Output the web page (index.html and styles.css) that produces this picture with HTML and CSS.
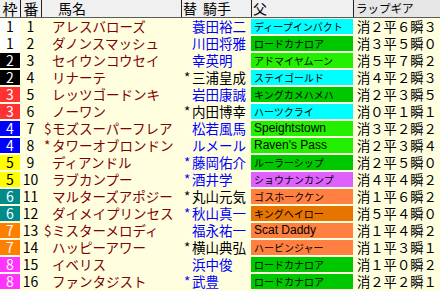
FILE: index.html
```html
<!DOCTYPE html>
<html lang="ja">
<head>
<meta charset="utf-8">
<link rel="stylesheet" href="styles.css">
</head>
<body>
<div class="table">
  <div class="head">
    <div class="h c-waku">枠</div>
    <div class="h c-num sep">番</div>
    <div class="h c-name sep">馬名</div>
    <div class="h c-jockey sep"><span>替</span><span class="kishu">騎手</span></div>
    <div class="h c-sire sep">父</div>
    <div class="h c-lap sep">ラップギア</div>
  </div>
  <div class="rows">
    <div class="row"><div class="waku w1">1</div><div class="num">1</div><div class="name"><span class="mk"></span>アレスバローズ</div><div class="jockey blue"><span class="mk"></span>蓑田裕二</div><div class="sire cyan">ディープインパクト</div><div class="lap">消２平６瞬３</div></div>
    <div class="row"><div class="waku w1">1</div><div class="num">2</div><div class="name"><span class="mk"></span>ダノンスマッシュ</div><div class="jockey blue"><span class="mk"></span>川田将雅</div><div class="sire green">ロードカナロア</div><div class="lap">消３平５瞬０</div></div>
    <div class="row"><div class="waku w2">2</div><div class="num">3</div><div class="name"><span class="mk"></span>セイウンコウセイ</div><div class="jockey blue"><span class="mk"></span>幸英明</div><div class="sire lime">アドマイヤムーン</div><div class="lap">消５平７瞬２</div></div>
    <div class="row"><div class="waku w2">2</div><div class="num">4</div><div class="name"><span class="mk"></span>リナーテ</div><div class="jockey"><span class="mk">*</span>三浦皇成</div><div class="sire cyan">ステイゴールド</div><div class="lap">消４平２瞬３</div></div>
    <div class="row"><div class="waku w3">3</div><div class="num">5</div><div class="name"><span class="mk"></span>レッツゴードンキ</div><div class="jockey blue"><span class="mk"></span>岩田康誠</div><div class="sire green">キングカメハメハ</div><div class="lap">消２平３瞬５</div></div>
    <div class="row"><div class="waku w3">3</div><div class="num">6</div><div class="name"><span class="mk"></span>ノーワン</div><div class="jockey"><span class="mk">*</span>内田博幸</div><div class="sire cyan">ハーツクライ</div><div class="lap">消０平１瞬１</div></div>
    <div class="row"><div class="waku w4">4</div><div class="num">7</div><div class="name"><span class="mk">$</span>モズスーパーフレア</div><div class="jockey blue"><span class="mk"></span>松若風馬</div><div class="sire lime lat">Speightstown</div><div class="lap">消３平２瞬２</div></div>
    <div class="row"><div class="waku w4">4</div><div class="num">8</div><div class="name"><span class="mk">*</span>タワーオブロンドン</div><div class="jockey blue"><span class="mk"></span>ルメール</div><div class="sire lime lat">Raven's Pass</div><div class="lap">消２平３瞬４</div></div>
    <div class="row"><div class="waku w5">5</div><div class="num">9</div><div class="name"><span class="mk"></span>ディアンドル</div><div class="jockey blue"><span class="mk">*</span>藤岡佑介</div><div class="sire green">ルーラーシップ</div><div class="lap">消２平５瞬０</div></div>
    <div class="row"><div class="waku w5">5</div><div class="num">10</div><div class="name"><span class="mk"></span>ラブカンプー</div><div class="jockey blue"><span class="mk">*</span>酒井学</div><div class="sire violet">ショウナンカンプ</div><div class="lap">消４平４瞬２</div></div>
    <div class="row"><div class="waku w6">6</div><div class="num">11</div><div class="name"><span class="mk"></span>マルターズアポジー</div><div class="jockey"><span class="mk">*</span>丸山元気</div><div class="sire orange">ゴスホークケン</div><div class="lap">消１平６瞬２</div></div>
    <div class="row"><div class="waku w6">6</div><div class="num">12</div><div class="name"><span class="mk"></span>ダイメイプリンセス</div><div class="jockey blue"><span class="mk">*</span>秋山真一</div><div class="sire dorange">キングヘイロー</div><div class="lap">消５平４瞬０</div></div>
    <div class="row"><div class="waku w7">7</div><div class="num">13</div><div class="name"><span class="mk">$</span>ミスターメロディ</div><div class="jockey blue"><span class="mk"></span>福永祐一</div><div class="sire orange lat">Scat Daddy</div><div class="lap">消１平４瞬２</div></div>
    <div class="row"><div class="waku w7">7</div><div class="num">14</div><div class="name"><span class="mk"></span>ハッピーアワー</div><div class="jockey"><span class="mk">*</span>横山典弘</div><div class="sire orange">ハービンジャー</div><div class="lap">消１平３瞬１</div></div>
    <div class="row"><div class="waku w8">8</div><div class="num">15</div><div class="name"><span class="mk"></span>イベリス</div><div class="jockey blue"><span class="mk"></span>浜中俊</div><div class="sire green">ロードカナロア</div><div class="lap">消１平０瞬２</div></div>
    <div class="row"><div class="waku w8">8</div><div class="num">16</div><div class="name"><span class="mk"></span>ファンタジスト</div><div class="jockey blue"><span class="mk">*</span>武豊</div><div class="sire green">ロードカナロア</div><div class="lap">消２平２瞬１</div></div>
  </div>
</div>
</body>
</html>
```
FILE: styles.css
```css
html, body {
  margin: 0;
  padding: 0;
}
body {
  width: 440px;
  height: 291px;
  overflow: hidden;
  background: #ffffe0;
  font-family: "Noto Sans CJK JP", "Noto Sans", sans-serif;
  color: #000;
}
.table {
  display: flex;
  flex-direction: column;
}
.head,
.row {
  display: grid;
  grid-template-columns: 20px 21px 140px 70px 102px 87px;
}
.head {
  height: 17px;
  background: #f0f0f0;
  border-bottom: 1px solid #5a5a5a;
}
.h {
  display: flex;
  align-items: center;
  font-size: 15px;
  line-height: 17px;
  height: 17px;
}
.sep {
  border-left: 1px solid #222;
}
.c-waku,
.c-num {
  justify-content: center;
}
.c-name {
  padding-left: 16px;
  font-size: 14px;
}
.c-jockey {
  padding-left: 1px;
  font-size: 14px;
}
.kishu {
  margin-left: 6px;
}
.c-sire {
  padding-left: 1px;
  font-size: 14px;
}
.c-lap {
  padding-left: 2px;
  font-size: 11.5px;
  background: #e6e6e6;
}
.rows {
  display: flex;
  flex-direction: column;
  gap: 2px;
  padding-top: 1px;
}
.row {
  height: 15px;
}
.row > div {
  display: flex;
  align-items: center;
  height: 15px;
  line-height: 15px;
  white-space: nowrap;
}
.waku {
  justify-content: center;
  font-size: 14px;
  color: #fff;
}
.w1 { background: #ffffff; color: #000; }
.w2 { background: #000000; }
.w3 { background: #ff3333; }
.w4 { background: #0000ff; }
.w5 { background: #ffff00; color: #000; }
.w6 { background: #008b8b; }
.w7 { background: #ff8000; }
.w8 { background: #ff33ff; }
.num {
  justify-content: center;
  font-size: 14px;
}
.name {
  padding-left: 3px;
  font-size: 13.5px;
  color: #800000;
}
.mk {
  display: inline-block;
  width: 8px;
  flex: none;
}
.jockey {
  padding-left: 3px;
  font-size: 13.5px;
}
.blue { color: #0000ff; }
.sire {
  padding-left: 3px;
  font-size: 10px;
}
.sire.lat {
  font-family: "Liberation Sans", Arial, sans-serif;
  font-size: 12px;
}
.cyan { background: #00ffff; }
.green { background: #00c800; }
.lime { background: #22f000; }
.violet { background: #e060ff; }
.orange { background: #ff8040; }
.dorange { background: #e87400; }
.lap {
  padding-left: 4px;
  font-size: 13.3px;
}
```
